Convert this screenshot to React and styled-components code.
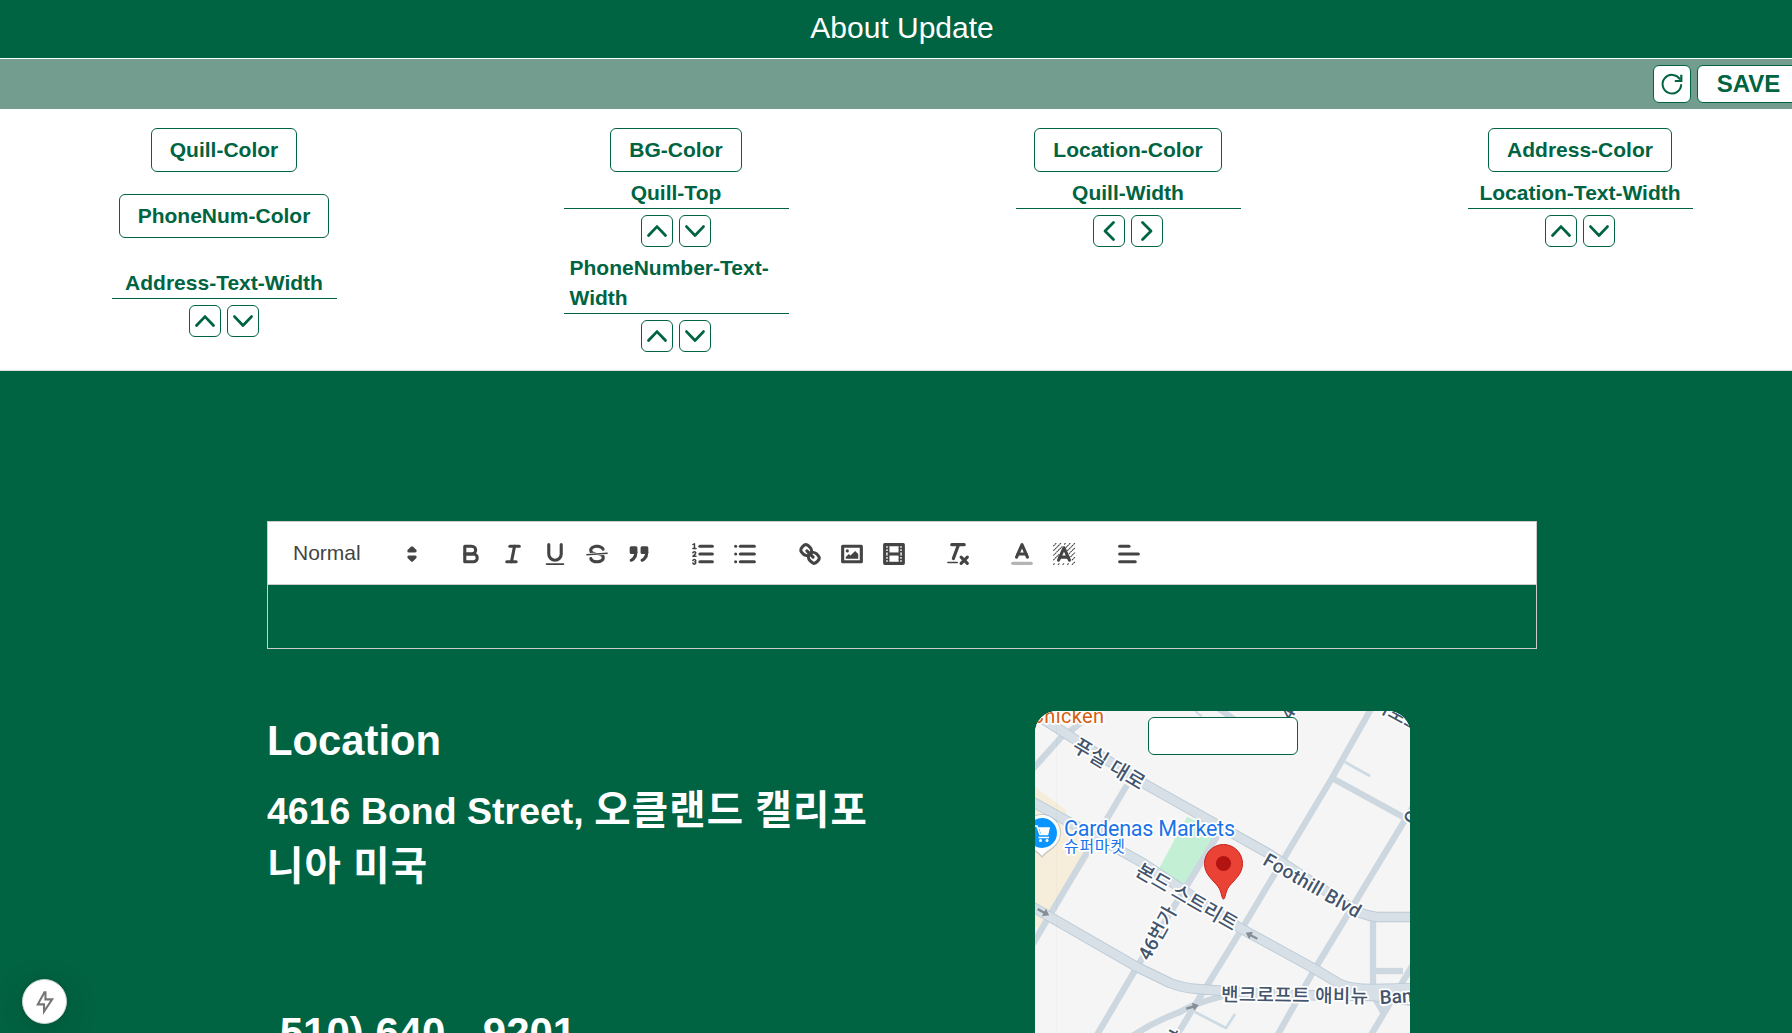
import React from "react";
import styled, { createGlobalStyle } from "styled-components";

const GREEN = "#006442";

const GlobalStyle = createGlobalStyle`
  * { box-sizing: border-box; }
  html, body { margin: 0; height: 1033px; overflow: hidden; }
  body {
    background: ${GREEN};
    font-family: "Liberation Sans", Arial, "Noto Sans CJK KR", sans-serif;
    line-height: 1.45;
  }
`;

const Page = styled.div`
  width: 1804px;
  height: 1033px;
  overflow: hidden;
  background: ${GREEN};
`;

const Header = styled.header`
  height: 59px;
  padding-bottom: 2px;
  display: flex;
  align-items: center;
  justify-content: center;
  border-bottom: 1px solid #fff;
  color: #fff;
  font-size: 30px;
`;

const ActionBar = styled.div`
  height: 50px;
  padding: 0 6px;
  display: flex;
  align-items: center;
  justify-content: flex-end;
  gap: 6px;
  background: #739d8e;
`;

const ActionButton = styled.button`
  height: 38px;
  width: ${(p) => p.$width}px;
  padding: 0 0 0 ${(p) => p.$indent || 0}px;
  display: flex;
  align-items: center;
  justify-content: center;
  border: 1px solid ${GREEN};
  border-radius: 6px;
  background: #fff;
  color: ${GREEN};
  font: bold 24px "Liberation Sans", Arial, sans-serif;
`;

const Controls = styled.section`
  height: 262px;
  padding-top: 13px;
  display: grid;
  grid-template-columns: repeat(4, 448px);
  grid-template-rows: 56px 75px 105px;
  column-gap: 4px;
  align-items: center;
  justify-items: center;
  background: #fff;
  border-bottom: 1px solid #ddd;
  color: ${GREEN};
  font-size: 21px;
  font-weight: bold;
`;

const ColorButton = styled.button`
  height: 44px;
  padding: 0 18px;
  border: 1px solid ${GREEN};
  border-radius: 6px;
  background: #fff;
  color: ${GREEN};
  font: bold 21px "Liberation Sans", Arial, sans-serif;
`;

const Stepper = styled.div`
  width: 225px;
  display: flex;
  flex-direction: column;
  align-items: stretch;
`;

const StepperLabel = styled.div`
  display: flex;
  justify-content: center;
  padding: 0 6px;
  line-height: 30px;
  border-bottom: 1px solid ${GREEN};
`;

const StepperButtons = styled.div`
  display: flex;
  justify-content: center;
  gap: 6px;
  padding: 6px 0;
`;

const StepButton = styled.button`
  width: 32px;
  height: 32px;
  padding: 0;
  display: flex;
  align-items: center;
  justify-content: center;
  border: 1px solid ${GREEN};
  border-radius: 6px;
  background: #fff;
`;

const Preview = styled.main`
  width: 1270px;
  margin: 150px auto 0;
`;

const Toolbar = styled.div`
  height: 64px;
  padding: 1px 12px 0;
  display: flex;
  align-items: center;
  border: 1px solid #ccc;
  background: #fff;
  color: #444;
`;

const FormatPicker = styled.div`
  width: 147px;
  padding: 0 1px 0 13px;
  margin-right: 22.5px;
  display: flex;
  align-items: center;
  justify-content: space-between;
  font-size: 21px;
`;

const ToolGroup = styled.div`
  display: flex;
  margin-right: ${(p) => p.$gap}px;
`;

const ToolButton = styled.button`
  width: 42px;
  height: 36px;
  padding: 0;
  border: 0;
  background: none;
  display: flex;
  align-items: center;
  justify-content: center;
`;

const Glyph = styled.svg`
  width: 28px;
  height: 28px;
  display: block;
  fill: none;
  stroke: #444;
  stroke-width: 2;
  stroke-linecap: round;
  stroke-linejoin: round;
  .thin { stroke-width: 1; }
  .fill { fill: #444; stroke: none; }
  .even { fill: #444; fill-rule: evenodd; }
`;

const Editor = styled.div`
  height: 64px;
  border: 1px solid #ccc;
  border-top: 0;
`;

const Contact = styled.section`
  margin-top: 62px;
  display: flex;
  justify-content: space-between;
  padding-right: 127px;
`;

const ContactText = styled.div`
  width: 635px;
  color: #fff;
  font-weight: bold;
`;

const Heading = styled.h2`
  margin: 0;
  font-size: 41.8px;
  line-height: 60px;
`;

const Address = styled.p`
  margin: 13px 0 0;
  font-size: 37.5px;
  line-height: 55.5px;
`;

const Hangul = styled.span`
  font-size: 39.5px;
  line-height: 1;
  letter-spacing: 1.2px;
  word-spacing: -1px;
`;

const Phone = styled.p`
  margin: 108px 0 0 1px;
  font-size: 42px;
  line-height: 60px;
  white-space: pre;
`;

const MapCard = styled.div`
  width: 375px;
  height: 400px;
  border-radius: 22px;
  overflow: hidden;
  background: #f5f5f5;
  position: relative;
`;

const MapButton = styled.button`
  position: absolute;
  top: 6px;
  left: 113px;
  width: 150px;
  height: 38px;
  border: 1px solid ${GREEN};
  border-radius: 6px;
  background: #fff;
`;

const DevBadge = styled.div`
  position: fixed;
  left: 22px;
  top: 979px;
  width: 45px;
  height: 45px;
  border-radius: 50%;
  background: #fff;
  border: 1px solid #c8d0cc;
  box-shadow: 0 0 6px rgba(0, 0, 0, 0.12), 0 8px 48px rgba(0, 0, 0, 0.2);
  display: flex;
  align-items: center;
  justify-content: center;
`;

const chevrons = {
  up: "M3.5 16.5 12 7.6 20.5 16.5",
  down: "M3.5 7.6 12 16.5 20.5 7.6",
  left: "M16.5 3.5 8 12 16.5 20.5",
  right: "M7.5 3.5 16 12 7.5 20.5",
};

const Chevron = ({ dir }) => (
  <svg width="24" height="24" viewBox="0 0 24 24" fill="none" stroke={GREEN}
    strokeWidth="2.8" strokeLinecap="round" strokeLinejoin="round">
    <path d={chevrons[dir]} />
  </svg>
);

const StepControl = ({ label, dirs = ["up", "down"] }) => (
  <Stepper>
    <StepperLabel>{label}</StepperLabel>
    <StepperButtons>
      {dirs.map((d) => <StepButton key={d}><Chevron dir={d} /></StepButton>)}
    </StepperButtons>
  </Stepper>
);

const L = ({ p, ...rest }) => <line x1={p[0]} y1={p[1]} x2={p[2]} y2={p[3]} {...rest} />;

const hatch = [];
for (let y = 2; y < 16; y++) {
  for (let x = 2; x < 16; x++) {
    const half = y < 3 || y > 14 ? 0 : 1.1 + Math.max(0, y - 3.5) * 0.42;
    if ((x + y) % 3 === 2 && Math.abs(x + 0.5 - 9) > half) hatch.push([x, y]);
  }
}

const icons = {
  bold: <><path d="M5,4H9.5A2.5,2.5,0,0,1,12,6.5v0A2.5,2.5,0,0,1,9.5,9H5Z" /><path d="M5,9h5.5A2.5,2.5,0,0,1,13,11.5v0A2.5,2.5,0,0,1,10.5,14H5Z" /></>,
  italic: <><L p={[7, 4, 13, 4]} /><L p={[5, 14, 11, 14]} /><L p={[8, 14, 10, 4]} /></>,
  underline: <><path d="M5,3V9a4.012,4.012,0,0,0,4,4H9a4.012,4.012,0,0,0,4-4V3" /><rect className="fill" x="3" y="15" width="12" height="1" rx="0.5" /></>,
  strike: <>
    <L className="thin" p={[15.5, 8.5, 2.5, 9.5]} />
    <path className="fill" d="M9.007,8C6.542,7.791,6,7.519,6,6.5,6,5.792,7.283,5,9,5c1.571,0,2.765.679,2.969,1.309a1,1,0,0,0,1.9-.617C13.356,4.106,11.354,3,9,3,6.2,3,4,4.538,4,6.5a3.2,3.2,0,0,0,.5,1.843Z" />
    <path className="fill" d="M8.984,10C11.457,10.208,12,10.479,12,11.5c0,.708-1.283,1.5-3,1.5-1.571,0-2.765-.679-2.969-1.309a1,1,0,1,0-1.9.617C4.644,13.894,6.646,15,9,15c2.8,0,5-1.538,5-3.5a3.2,3.2,0,0,0-.5-1.843Z" />
  </>,
  quote: <>
    <rect className="even" x="4" y="5" width="3" height="3" /><rect className="even" x="11" y="5" width="3" height="3" />
    <path className="even" d="M7,8c0,4.031-3,5-3,5" /><path className="even" d="M14,8c0,4.031-3,5-3,5" />
  </>,
  ordered: <>
    <L p={[7, 4, 15, 4]} /><L p={[7, 9, 15, 9]} /><L p={[7, 14, 15, 14]} />
    <L className="thin" p={[2.5, 5.5, 4.5, 5.5]} />
    <path className="fill" d="M3.5,6A0.5,0.5,0,0,1,3,5.5V3.085l-0.276.138A0.5,0.5,0,0,1,2.053,3c-0.124-.247-0.023-0.324.224-0.447l1-.5A0.5,0.5,0,0,1,4,2.5v3A0.5,0.5,0,0,1,3.5,6Z" />
    <path className="thin" d="M4.5,10.5h-2c0-.234,1.85-1.076,1.85-2.234A0.959,0.959,0,0,0,2.5,8.156" />
    <path className="thin" d="M2.5,14.846a0.959,0.959,0,0,0,1.85-.109A0.7,0.7,0,0,0,3.75,14a0.688,0.688,0,0,0,.6-0.736,0.959,0.959,0,0,0-1.85-.109" />
  </>,
  bullet: <>{[4, 9, 14].map((y) => <g key={y}><L p={[6, y, 15, y]} /><L p={[3, y, 3, y]} /></g>)}</>,
  link: <>
    <L p={[7, 7, 11, 11]} />
    <path d="M8.9,4.577a3.476,3.476,0,0,1,.36,4.679A3.476,3.476,0,0,1,4.577,8.9C3.185,7.5,2.035,6.4,4.217,4.217S7.5,3.185,8.9,4.577Z" />
    <path d="M13.423,9.1a3.476,3.476,0,0,0-4.679-.36,3.476,3.476,0,0,0,.36,4.679c1.392,1.392,2.5,2.542,4.679.36S14.815,10.5,13.423,9.1Z" />
  </>,
  image: <>
    <rect x="3" y="4" width="12" height="10" /><circle className="fill" cx="6" cy="7" r="1" />
    <polyline className="fill" points="5 12 5 11 7 9 8 10 11 7 13 9 13 12 5 12" />
  </>,
  video: <>
    <rect x="3" y="3" width="12" height="12" />
    <rect className="fill" x="5" y="3" width="1" height="12" /><rect className="fill" x="12" y="3" width="1" height="12" />
    <rect className="fill" x="5" y="8" width="8" height="2" />
    {[5, 7, 10, 12].map((y) => <g key={y}><rect className="fill" x="3" y={y} width="3" height="1" /><rect className="fill" x="12" y={y} width="3" height="1" /></g>)}
  </>,
  clean: <>
    <L p={[5, 3, 13, 3]} /><L p={[6, 12, 9.35, 3]} />
    <L p={[11, 11, 15, 15]} /><L p={[15, 11, 11, 15]} />
    <rect className="fill" x="2" y="14" width="7" height="1" rx="0.5" />
  </>,
  color: <><L p={[3, 15, 15, 15]} opacity="0.4" /><polyline points="5.5 11 9 3 12.5 11" /><L p={[11.63, 9, 6.38, 9]} /></>,
  background: <>
    {hatch.map(([x, y]) => <path key={x + "-" + y} className="fill" d={`M${x} ${y + 1}V${y + 0.6}L${x + 0.6} ${y}H${x + 1.15}V${y + 0.4}L${x + 0.4} ${y + 1.1}Z`} />)}
    <polyline points="5.5 13 9 5 12.5 13" /><L p={[11.63, 11, 6.38, 11]} />
  </>,
  align: <><L p={[3, 9, 15, 9]} /><L p={[3, 14, 13, 14]} /><L p={[3, 4, 9, 4]} /></>,
  picker: <><polygon className="even" points="7 11 9 13 11 11 7 11" /><polygon className="even" points="7 7 9 5 11 7 7 7" /></>,
};

const toolGroups = [
  { names: ["bold", "italic", "underline", "strike", "quote"], gap: 22 },
  { names: ["ordered", "bullet"], gap: 23 },
  { names: ["link", "image", "video"], gap: 22 },
  { names: ["clean"], gap: 22 },
  { names: ["color", "background"], gap: 23.5 },
  { names: ["align"], gap: 0 },
];

const Tool = ({ name }) => <Glyph viewBox="0 0 18 18">{icons[name]}</Glyph>;

const majorRoads = [
  "M8 8 L30 22 L108 72 L236 144 L312 194 Q324 204 342 206 L380 206",
  "M-4 90 L108 152 L205 217 L278 257 L303 272 Q314 278 338 278 L380 277",
  "M-4 195 L102 256 L135 272 Q148 277 162 278 L250 284 L338 285 L380 290",
];
const minorRoads = [
  "M92 74 L-4 236", "M184 122 L102 256 L56 334", "M336 -2 L297 67 L205 221 L165 286 L136 334",
  "M379 94 L278 261 L237 334", "M379 252 L330 334", "M297 67 L370 107",
  "M338 206 V277", "M338 260 H368", "M30 22 L-4 60", "M28 26 L48 10", "M183 -3 L200 9",
  "M192 284 Q160 292 145 301 Q115 312 90 330", "M338 284 L348 301",
];

const MapLabel = styled.text`
  font-family: Roboto, "Noto Sans CJK KR", sans-serif;
  font-size: ${(p) => p.$size || 18.5}px;
  font-weight: ${(p) => p.$weight || 500};
  fill: ${(p) => p.$color || "#43556d"};
  stroke: #fff;
  stroke-width: 3.5px;
  stroke-linejoin: round;
  paint-order: stroke;
`;

const Arrow = ({ x, y, r }) => (
  <path transform={`translate(${x} ${y}) rotate(${r})`} d="M-6 -1.2H1V-4.2L7 0L1 4.2V1.2H-6Z" fill="#858d96" />
);

const StreetMap = () => (
  <svg width="375" height="400" viewBox="0 0 375 400">
    <rect width="375" height="400" fill="#f5f5f5" />
    <path d="M0 76 L31 99 V114 L64 132 L18 200 L6 219 L0 215Z" fill="#f6eedb" />
    <path d="M152 106 L187 122 L149 177 L122 161Z" fill="#c3f0d4" />
    <g fill="none" strokeLinejoin="round">
      {minorRoads.map((d) => <path key={d} d={d} stroke="#ccd7e0" strokeWidth="6.3" />)}
      <path d="M310 51 L335 65 M160 301 L191 317 L200 303" stroke="#ccdae4" strokeWidth="2.6" />
      <path d="M160 -3 Q161 3 167 5" stroke="#ccdae4" strokeWidth="2" />
      {majorRoads.map((d) => <path key={d} d={d} stroke="#bccbd6" strokeWidth="10.4" />)}
      {majorRoads.map((d) => <path key={d} d={d} stroke="#d7dfe7" strokeWidth="8.6" />)}
      <path d="M21.5 0V400" stroke="#000" strokeOpacity="0.02" strokeWidth="1" />
    </g>
    <Arrow x={8} y={201} r={28} />
    <Arrow x={217} y={225} r={207} />
    <Arrow x={157} y={296} r={-16} />
    <MapLabel x="-4" y="12" $size={20} $weight={400} $color="#d55f10" textLength="73">Chicken</MapLabel>
    <MapLabel x="0" y="7" textAnchor="middle" transform="translate(74 53) rotate(31)" $size={20} textLength="80">푸실 대로</MapLabel>
    <MapLabel x="0" y="7" textAnchor="middle" transform="translate(152 186) rotate(30)" $size={19.5} textLength="114">본드 스트리트</MapLabel>
    <MapLabel x="0" y="6" textAnchor="middle" transform="translate(277 175) rotate(30)" textLength="109" $size={19}>Foothill Blvd</MapLabel>
    <MapLabel x="0" y="7" textAnchor="middle" transform="translate(122 222) rotate(-61)" $size={19.5} textLength="58">46번가</MapLabel>
    <MapLabel x="186" y="290" transform="rotate(0.8 186 290)" $size={19} textLength="147">밴크로프트 애비뉴</MapLabel>
    <MapLabel x="345" y="293" transform="rotate(-3 345 293)" $size={19}>Bancroft</MapLabel>
    <MapLabel x="0" y="0" transform="translate(256 10) rotate(-60)">46번가</MapLabel>
    <MapLabel x="0" y="0" transform="translate(336 -4) rotate(29)" $size={19.5}>미로스</MapLabel>
    <MapLabel x="0" y="0" transform="translate(379 115) rotate(-61)">C</MapLabel>
    <MapLabel x="0" y="0" transform="translate(122 371) rotate(-60)">46번가</MapLabel>
    <MapLabel x="29" y="124.5" $size={21.5} $weight={400} $color="#1a73e8" textLength="171">Cardenas Markets</MapLabel>
    <MapLabel x="29" y="140.5" $size={16} $weight={400} $color="#1a73e8" textLength="61">슈퍼마켓</MapLabel>
    <path d="M7 147 C2 140 -12 136 -12 122 A19 19 0 0 1 26 122 C26 136 12 140 7 147Z" fill="#9aa5ad" opacity="0.5" />
    <path d="M7 145 C2 138 -11 135 -11 122 A18 18 0 0 1 25 122 C25 135 12 138 7 145Z" fill="#fff" />
    <circle cx="7" cy="122" r="15" fill="#0a94ff" />
    <path d="M-1 115 H2 L5 123.5 H12.5 L14 117 H3" fill="none" stroke="#fff" strokeWidth="1.7" />
    <path d="M4 117H14L12.5 123H6Z" fill="#fff" />
    <path d="M3.5 126.5H14" stroke="#fff" strokeWidth="1.5" />
    <circle cx="5.5" cy="129.5" r="1.5" fill="#fff" /><circle cx="12" cy="129.5" r="1.5" fill="#fff" />
    <path d="M188.5 188 C186.5 188 187 181 183 175.5 C177 168 169.5 163 169.5 152.5 A19 19 0 0 1 207.5 152.5 C207.5 163 200 168 194 175.5 C190 181 190.5 188 188.5 188Z" fill="#ea4335" stroke="#c5221f" strokeWidth="1" />
    <circle cx="188.5" cy="152.5" r="7.6" fill="#b31412" />
  </svg>
);

export default function App() {
  return (
    <>
      <GlobalStyle />
      <Page>
        <Header>About Update</Header>
        <ActionBar>
          <ActionButton $width={38} aria-label="Reload">
            <svg width="24" height="24" viewBox="0 0 24 24" fill="none" stroke={GREEN} strokeWidth="2">
              <path d="M21.2 12.2A9.3 9.3 0 1 1 20 7.6" />
              <path d="M21.3 2.8V9H14.8" strokeWidth="2.2" />
            </svg>
          </ActionButton>
          <ActionButton $width={101} $indent={2}>SAVE</ActionButton>
        </ActionBar>
        <Controls>
          <ColorButton>Quill-Color</ColorButton>
          <ColorButton>BG-Color</ColorButton>
          <ColorButton>Location-Color</ColorButton>
          <ColorButton>Address-Color</ColorButton>
          <ColorButton>PhoneNum-Color</ColorButton>
          <StepControl label="Quill-Top" />
          <StepControl label="Quill-Width" dirs={["left", "right"]} />
          <StepControl label="Location-Text-Width" />
          <StepControl label="Address-Text-Width" />
          <StepControl label="PhoneNumber-Text-Width" />
        </Controls>
        <Preview>
          <Toolbar>
            <FormatPicker>Normal<Tool name="picker" /></FormatPicker>
            {toolGroups.map((g) => (
              <ToolGroup key={g.names[0]} $gap={g.gap}>
                {g.names.map((n) => <ToolButton key={n} aria-label={n}><Tool name={n} /></ToolButton>)}
              </ToolGroup>
            ))}
          </Toolbar>
          <Editor />
          <Contact>
            <ContactText>
              <Heading>Location</Heading>
              <Address>4616 Bond Street, <Hangul>오클랜드 캘리포니아 미국</Hangul></Address>
              <Phone>{" 510) 640 - 9201"}</Phone>
            </ContactText>
            <MapCard>
              <StreetMap />
              <MapButton aria-label="Map" />
            </MapCard>
          </Contact>
        </Preview>
      </Page>
      <DevBadge>
        <svg width="45" height="45" viewBox="0 0 45 45" fill="none" stroke="#757575" strokeWidth="2.2">
          <path d="M22.3 13 L15.5 25.5 H22 V33 L30.5 20.3 H23.5 V13Z" />
        </svg>
      </DevBadge>
    </>
  );
}
